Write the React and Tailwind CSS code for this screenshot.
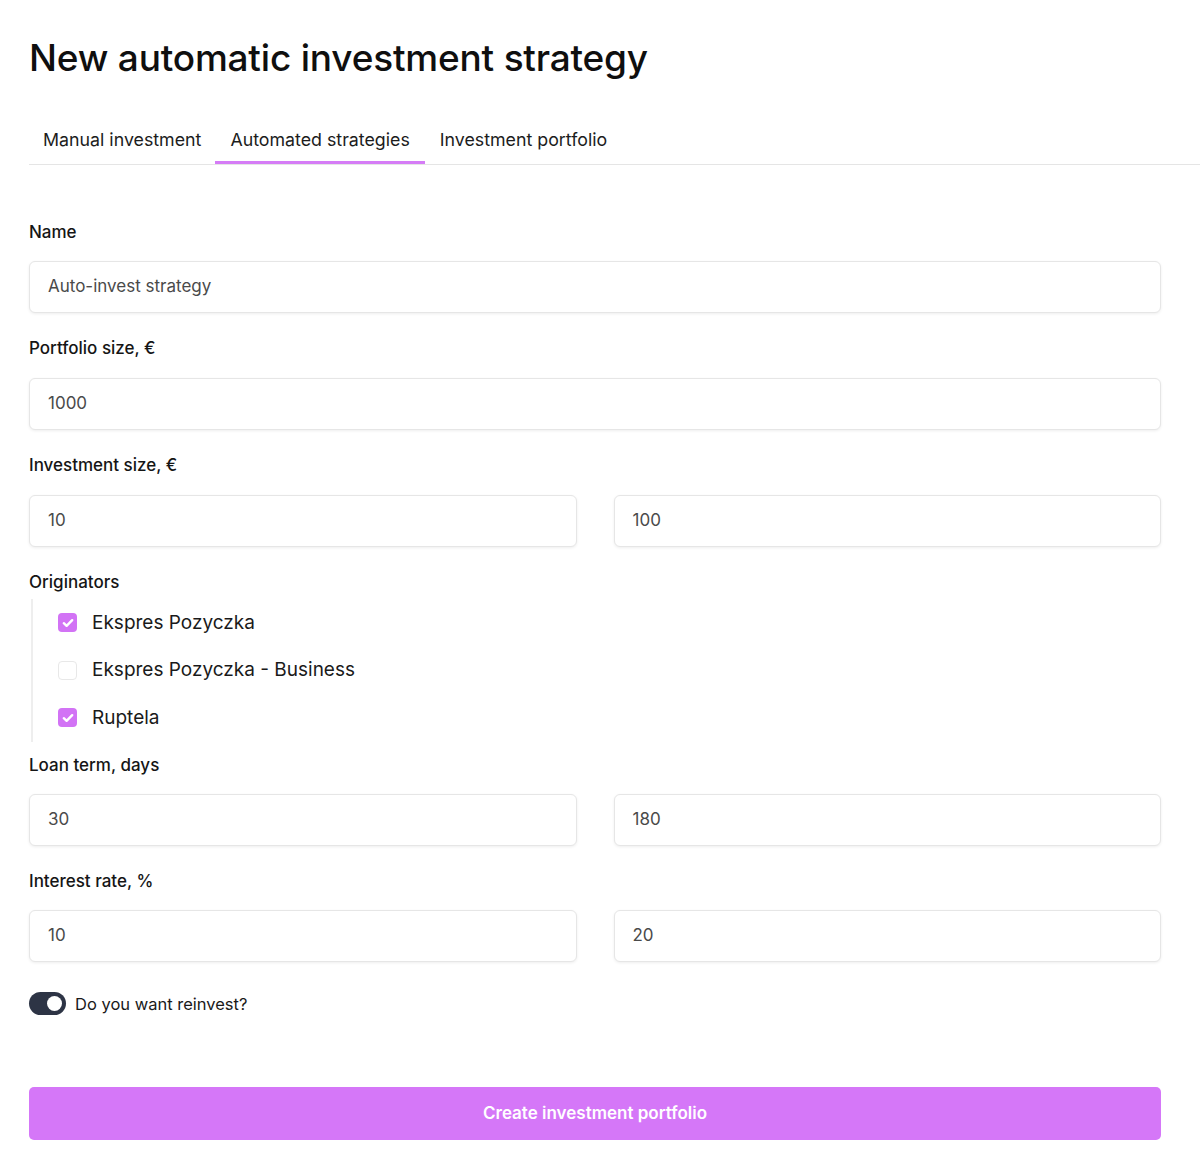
import React from "react";

const font = { fontFamily: "Inter, 'Noto Sans', sans-serif" };

function Field({ value }) {
  return (
    <div className="h-[52px] flex items-center px-[18px] rounded-[6px] border border-[#e6e6e6] bg-white shadow-[0_1px_3px_rgba(0,0,0,0.07)] text-[17px] text-[#4a4a4a]">
      {value}
    </div>
  );
}

function Label({ children }) {
  return <div className="h-[20px] flex items-center text-[17px] font-medium text-[#151515]">{children}</div>;
}

function Check({ checked, label }) {
  return (
    <div className="h-[47.5px] flex items-center">
      {checked ? (
        <div className="w-[19px] h-[19px] rounded-[4px] bg-[#d273f5] flex items-center justify-center">
          <svg width="12" height="10" viewBox="0 0 12 10" fill="none">
            <path d="M1.8 5.2 L4.6 7.8 L10.2 2.2" stroke="white" strokeWidth="2.4" strokeLinecap="round" strokeLinejoin="round" />
          </svg>
        </div>
      ) : (
        <div className="w-[19px] h-[19px] rounded-[4px] border border-[#e8e8e8] bg-white" />
      )}
      <span className="ml-[15px] text-[19px] text-[#1a1a1a]">{label}</span>
    </div>
  );
}

export default function App() {
  return (
    <div className="bg-white min-h-[1172px] pl-[29px] pt-[34px]" style={font}>
      <h1 className="text-[37px] leading-[48px] font-medium text-[#0f0f0f] tracking-[-0.2px]">
        New automatic investment strategy
      </h1>
      <div className="mt-[35px] flex border-b border-[#e5e5e5] text-[17.8px] text-[#1c1c1c]">
        <div className="px-[14px] h-[47px] flex items-center">Manual investment</div>
        <div className="px-[15px] h-[47px] flex items-center border-b-[3px] border-[#d57cf6] mb-[-1px] pt-[3px]">Automated strategies</div>
        <div className="px-[15px] h-[47px] flex items-center">Investment portfolio</div>
      </div>

      <div className="pr-[39px] pt-[58px]">
        <Label>Name</Label>
        <div className="mt-[18px]"><Field value="Auto-invest strategy" /></div>

        <div className="mt-[26px]"><Label>Portfolio size, €</Label></div>
        <div className="mt-[19px]"><Field value="1000" /></div>

        <div className="mt-[26px]"><Label>Investment size, €</Label></div>
        <div className="mt-[19px] grid grid-cols-2 gap-[37px]">
          <Field value="10" />
          <Field value="100" />
        </div>

        <div className="mt-[26px]"><Label>Originators</Label></div>
        <div className="mt-[6px] ml-[2px] pl-[25px] border-l-2 border-[#eeeeee]">
          <Check checked label="Ekspres Pozyczka" />
          <Check checked={false} label="Ekspres Pozyczka - Business" />
          <Check checked label="Ruptela" />
        </div>

        <div className="mt-[14px]"><Label>Loan term, days</Label></div>
        <div className="mt-[18px] grid grid-cols-2 gap-[37px]">
          <Field value="30" />
          <Field value="180" />
        </div>

        <div className="mt-[26px]"><Label>Interest rate, %</Label></div>
        <div className="mt-[18px] grid grid-cols-2 gap-[37px]">
          <Field value="10" />
          <Field value="20" />
        </div>

        <div className="mt-[30px] flex items-center">
          <div className="w-[37px] h-[23px] rounded-full bg-[#2d3445] flex items-center justify-end pr-[4px]">
            <div className="w-[15px] h-[15px] rounded-full bg-white" />
          </div>
          <span className="ml-[9px] text-[16.5px] text-[#1a1a1a]">Do you want reinvest?</span>
        </div>

        <button className="mt-[71px] w-full h-[53px] rounded-[5px] bg-[#d577f8] text-white text-[17px] font-semibold">
          Create investment portfolio
        </button>
      </div>
    </div>
  );
}
